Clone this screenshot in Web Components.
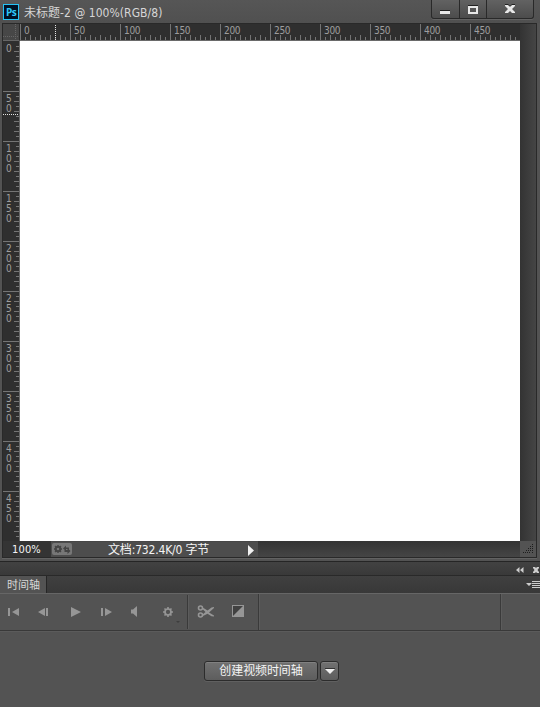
<!DOCTYPE html>
<html lang="zh-CN"><head><meta charset="utf-8"><title>未标题-2</title>
<style>html,body{margin:0;height:707px;overflow:hidden;background:#535353}</style></head><body>
<ps-app></ps-app>
<script>
const base=`*{box-sizing:border-box}svg{display:block}`;
function define(name,make){customElements.define(name,class extends HTMLElement{connectedCallback(){if(this.shadowRoot)return;this.attachShadow({mode:'open'}).innerHTML='<style>'+base+'</style>'+make(this)}})}

define('ps-title',()=>`<style>
:host{display:flex;height:23px;background:linear-gradient(#565656,#505050);color:#d6d6d6;font-size:12px;padding-left:3px}
.logo{width:16px;height:16px;margin-top:4px;border:1px solid #26c3f5;background:#001225;color:#2fc8fa;font:bold 10px/14px "Open Sans",sans-serif;text-align:center;letter-spacing:-.6px;flex:none}
.t{margin:4px 0 0 5px;line-height:18px;white-space:nowrap;flex:1}
.b{display:flex;width:103px;height:19px;margin-right:6px;border:1px solid #292929;border-top:0;border-radius:0 0 3px 3px;background:linear-gradient(#626262,#4c4c4c);box-shadow:0 1px #626262}
.b span{height:18px;border-right:1px solid #292929}.b span:last-child{border:0}
</style><div class="logo">Ps</div><div class="t">未标题<span style="letter-spacing:.06px">-2 @ 100%(RGB/8)</span></div>
<div class="b"><span style="width:28px"><svg width="27" height="18"><path d="M8 10h10v1H8z" fill="#222"/><path d="M8 11h10v3H8z" fill="#e8e8e8"/></svg></span><span style="width:27px"><svg width="26" height="18"><path d="M8 5h10v1H8z" fill="#222"/><path fill-rule="evenodd" d="M8 6h10v8H8zm2 2v4h6V8z" fill="#e8e8e8"/></svg></span><span style="width:46px"><svg width="46" height="18"><path d="M18 4h3l2 2 2-2h3v2h-10z" fill="#222"/><path d="M18 5h3l2 2 2-2h3v1l-3 3 3 3v1h-3l-2-2-2 2h-3v-1l3-3-3-3z" fill="#e8e8e8"/></svg></span></div>`);

define('ps-ruler',h=>{const v=h.hasAttribute('vertical');let s='';
for(let i=0;i<10;i++){const t=String(i*50);s+=`<div>${v?[...t].map(c=>`<span>${c}</span>`).join(''):`<span>${t}</span>`}</div>`}
return `<style>
:host{display:flex;position:relative;background:#2f2f2f;color:#9e9e9e;font-size:10px;overflow:hidden}
:host([vertical]){flex-direction:column;width:17px;height:500px;border-right:1px solid #6a6a6a}
:host(:not([vertical])){width:500px;height:17px;border-bottom:1px solid #6a6a6a;letter-spacing:-.3px}
div{flex:none;width:50px;height:17px;border-left:1px solid #747474;padding-left:3px;line-height:13px;
background:repeating-linear-gradient(90deg,transparent 0 9px,#747474 9px 10px) 0 11px/49px 6px no-repeat,repeating-linear-gradient(90deg,transparent 0 4px,#747474 4px 5px) 0 13px/49px 4px no-repeat}
:host([vertical]) div{width:17px;height:50px;border-left:0;border-top:1px solid #747474;padding:2px 0 0 3px;display:flex;flex-direction:column;
background:repeating-linear-gradient(180deg,transparent 0 9px,#747474 9px 10px) 11px 0/6px 49px no-repeat,repeating-linear-gradient(180deg,transparent 0 4px,#747474 4px 5px) 13px 0/4px 49px no-repeat}
:host([vertical]) div:first-of-type{border-top-color:transparent}
:host([vertical]) span{height:10px;line-height:10px}
i{position:absolute;left:35px;top:1px;height:15px;border-left:1px dotted #e5e5e5}
:host([vertical]) i{left:0;top:73px;width:17px;height:0;border-left:0;border-top:1px dotted #e5e5e5}
</style>${s}<i></i>`});

define('ps-status',()=>`<style>
:host{display:flex;height:16px;background:linear-gradient(#343434,#454545);color:#f4f4f4;font-size:11px;line-height:17px;white-space:nowrap}
.z{width:48px;padding-left:9px;background:#343434;letter-spacing:.15px}.d{width:207px;background:#4d4d4d;display:flex;border-top:1px solid #474747;line-height:16px}
.t{width:140px;margin-left:34px;font-size:12px;letter-spacing:-.17px}
.e{flex:1}.g{width:16px;background:#535353}
</style><div class="z">100%</div><div class="d"><svg width="23" height="14"><rect x="1" y="1" width="20" height="12" rx="2" fill="#777"/><circle cx="7" cy="7" r="2.300" fill="none" stroke="#444" stroke-width="2"/><path d="M7 3v2m0 4v2M3 7h2m4 0h2M4 4l2 2m2 2 2 2m0-6L8 6M6 8l-2 2" stroke="#444" stroke-width="1.300"/><path d="M12 6.500l3-3v2h3V9h-1V7h-2v2zM19.500 9l-3 3v-2h-3V8h3V6z" fill="#444"/></svg><div class="t">文档:732.4K/0 字节</div><svg width="8" height="15"><path d="M0 3v11l6-5.5z" fill="#f2f2f2"/></svg></div><div class="e"></div><svg class="g" width="16" height="16"><path d="M12 3h1v1h-1zM10 5h1v1h-1zm2 0h1v1h-1zM8 7h1v1H8zm2 0h1v1h-1zm2 0h1v1h-1zM6 9h1v1H6zm2 0h1v1H8zm2 0h1v1h-1zm2 0h1v1h-1zM3 11h1v1H3zm2 0h1v1H5zm2 0h1v1H7zm2 0h1v1H9zm3 0h1v1h-1z" fill="#1d1d1d"/></svg>`);

define('ps-document',()=>`<style>
:host{display:block;height:561px;background:#535353}
.f{margin-left:2px;width:535px;height:535px;border:1px solid #292929;background:#2f2f2f;box-shadow:0 1px #626262}
.r,.m{display:flex}.c{width:17px;height:17px;background:#474747;border-right:1px solid #292929;border-bottom:1px solid #666}
.w{width:500px;height:500px;background:#fff}.s{width:16px;height:500px;background:linear-gradient(90deg,#333,#454545)}
.s.h{height:17px}
</style><ps-title></ps-title><div class="f"><div class="r"><div class="c"><svg width="16" height="16"><path d="M12.5 0v16M0 12.5h16" stroke="#666" stroke-dasharray="1 1"/></svg></div><ps-ruler></ps-ruler><div class="s h"></div></div><div class="m"><ps-ruler vertical></ps-ruler><div class="w"></div><div class="s"></div></div><ps-status></ps-status></div>`);

define('ps-tools',()=>`<style>:host{display:flex;height:38px;border-top:1px solid #666;border-bottom:1px solid #393939;background:#535353}
svg{flex:none}</style><svg width="540" height="37" fill="#969696"><g><path d="M8 14h2v8H8zM19 14v8l-7-4zM45 14v8l-7-4zM46 14h2v8h-2zM71 13v10l10-5zM101 14h2v8h-2zM105 14v8l7-4zM131 15.500h2l4-3.500v11l-4-3.500h-2z"/></g>
<circle cx="168" cy="18" r="3" fill="none" stroke="#969696" stroke-width="1.700"/><path d="M168 13v2m0 6v2m-5-5h2m6 0h2m-8.500-3.500 1.500 1.500m4 4 1.500 1.500m0-7-1.500 1.500m-4 4-1.500 1.500" stroke="#969696" stroke-width="1.600"/><path d="M176 27h4l-2 2z" fill="#3e3e3e"/>
<path d="M187.500 1v34M258.500 0v36M500.500 0v36" stroke="#3a3a3a"/><path d="M188.500 1v34M259.500 0v36M501.500 0v36" stroke="#5c5c5c"/>
<g fill="none" stroke="#969696" stroke-width="1.600"><circle cx="200.500" cy="14" r="2"/><circle cx="200.500" cy="21" r="2"/></g><path d="M202 14.500l1.500-.5 4 2.500 4-3 2.500-.5v1l-5 4.500 5 3v1l-2.500-.2-4-2.600-4 2-1.500-.7 3.500-3z"/>
<path fill-rule="evenodd" d="M232 11h12v12h-12zm1 1v10h10V12z"/><path d="M233 12h10L233 22z" fill="#414141"/><path d="M243 12v10h-10z"/></svg>`);

define('ps-button',()=>`<style>:host{display:flex;height:20px;border:1px solid #2c2c2c;border-radius:3px;background:linear-gradient(#717171,#5d5d5d);box-shadow:inset 0 1px #818181,0 1px #606060;color:#f4f4f4;font-size:12px;line-height:18px;letter-spacing:-.1px;justify-content:center;white-space:nowrap;box-sizing:border-box}</style><slot></slot>`);

define('ps-timeline',()=>`<style>
:host{display:block;height:146px;border-top:1px solid #252525}
.h{height:14px;background:linear-gradient(#424242,#393939);display:flex;justify-content:flex-end;border-bottom:1px solid #292929}
.t{height:17px;display:flex;justify-content:space-between;background:linear-gradient(#404040,#383838)}
.tab{width:47px;padding-left:7px;background:#535353;border-right:1px solid #262626;color:#d8d8d8;font-size:11px;line-height:19px;white-space:nowrap}
.a{height:76px;padding-top:29px;display:flex;justify-content:center;gap:2px;padding-left:3px;border-top:1px solid #5b5b5b}
</style><div class="h"><svg width="25" height="13" fill="#cdcdcd"><path d="M4.500 5v6L1 8zM8.500 5v6L5 8z"/><path d="M18 5h2l1 1 1-1h2v1l-1.500 2L24 10v1h-2l-1-1-1 1h-2v-1l1.500-2L18 6z"/></svg></div><div class="t"><div class="tab">时间轴</div><svg width="15" height="17" fill="#cdcdcd"><path d="M1 7h6l-3 3zM7 5h8v1H7zM7 7h8v1H7zM7 9h8v1H7zM7 11h8v1H7z"/></svg></div><ps-tools></ps-tools><div class="a"><ps-button style="width:114px">创建视频时间轴</ps-button><ps-button style="width:19px"><svg width="10" height="18" style="display:block"><path d="M0 7h10L5 12z" fill="#eee"/><path d="M0 6h10v1H0z" fill="#333"/></svg></ps-button></div>`);

define('ps-app',()=>`<style>:host{display:block;width:540px;height:707px;font-family:"DejaVu Sans Condensed","Noto Sans CJK SC",sans-serif}</style><ps-document></ps-document><ps-timeline></ps-timeline>`);
</script></body></html>
